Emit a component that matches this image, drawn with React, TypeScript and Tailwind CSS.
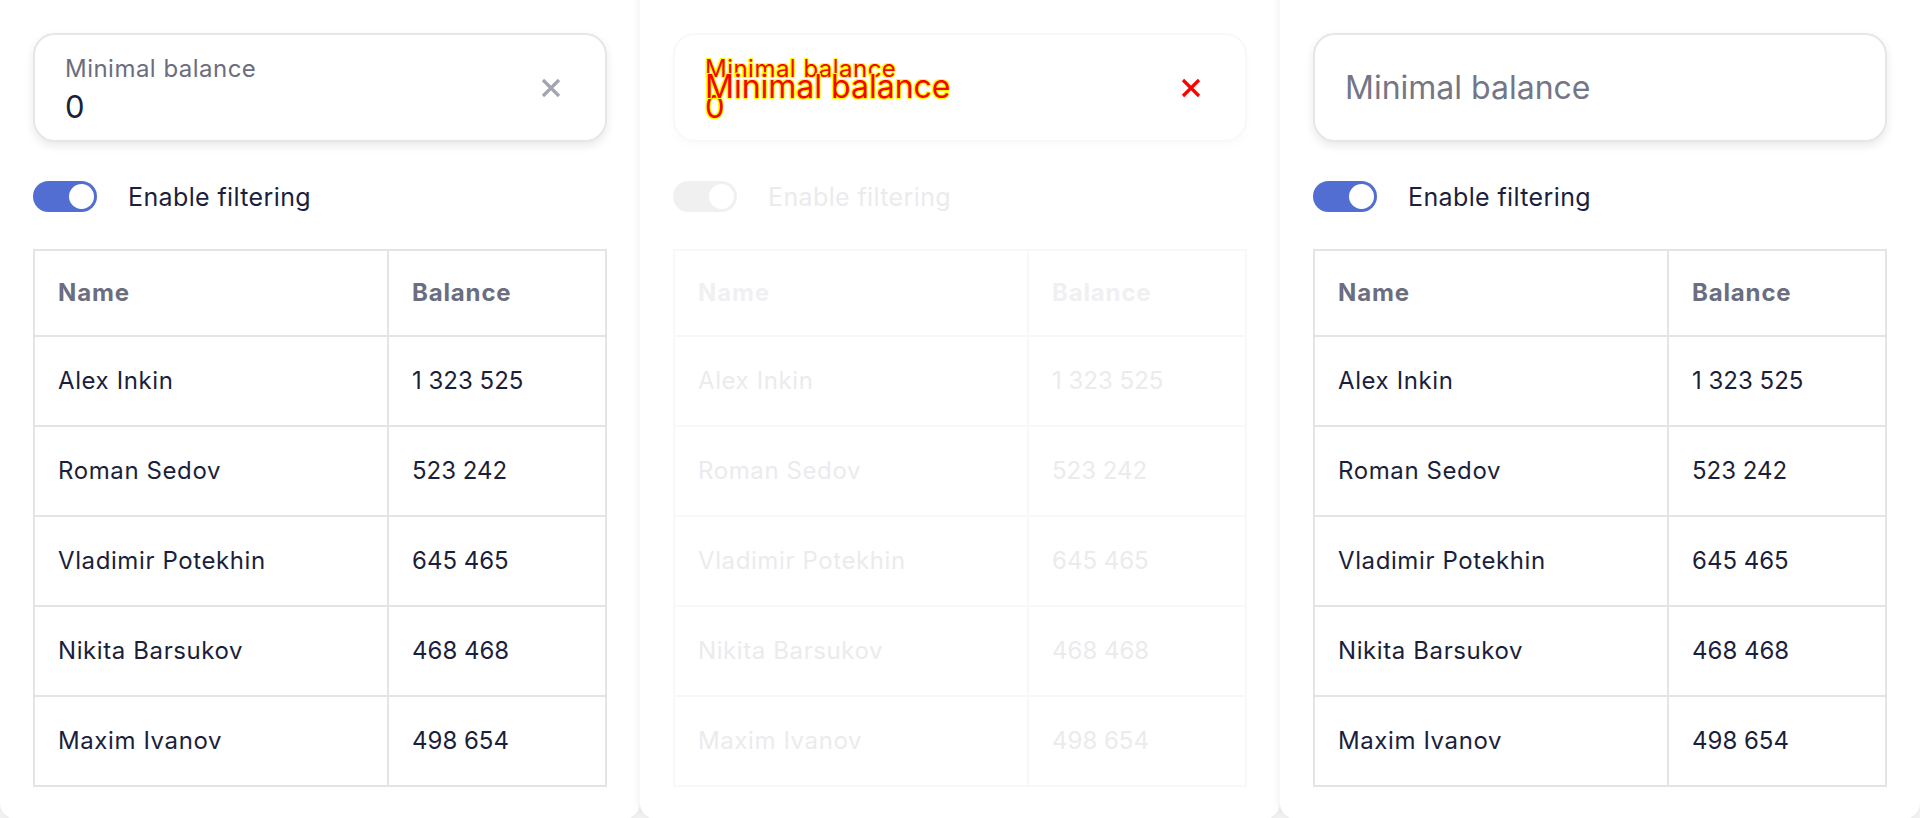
import React from "react";

const rows: [string, string][] = [
  ["Alex Inkin", "1 323 525"],
  ["Roman Sedov", "523 242"],
  ["Vladimir Potekhin", "645 465"],
  ["Nikita Barsukov", "468 468"],
  ["Maxim Ivanov", "498 654"],
];

function Cross({ color }: { color: string }) {
  return (
    <svg width="26" height="26" viewBox="0 0 26 26" fill="none">
      <path d="M5 5 L21 21 M21 5 L5 21" stroke={color} strokeWidth="3.2" strokeLinecap="butt" />
    </svg>
  );
}

function Toggle({ faded }: { faded?: boolean }) {
  return (
    <div className="flex items-center gap-[31px]">
      <div
        className={
          faded
            ? "flex h-[31px] w-[64px] items-center justify-end rounded-full bg-[#f0f0f0] pr-[3px]"
            : "flex h-[31px] w-[64px] items-center justify-end rounded-full bg-[#526ed3] pr-[3px]"
        }
      >
        <div className="h-[25px] w-[25px] rounded-full bg-white" />
      </div>
      <span
        className={
          faded
            ? "text-[25px] leading-[30px] tracking-[0.015em] text-[#ebebed]"
            : "text-[25px] leading-[30px] tracking-[0.015em] text-[#1b1f3b]"
        }
      >
        Enable filtering
      </span>
    </div>
  );
}

function DataTable({ faded }: { faded?: boolean }) {
  const border = faded ? "border-2 border-[#f8f8f8]" : "border-2 border-[#e4e4e4]";
  const head = faded ? "text-[#f0f0f2]" : "text-[#6b6d80]";
  const body = faded ? "text-[#ebebed]" : "text-[#1b1f3b]";
  return (
    <table className="w-full border-collapse text-left text-[24px]">
      <colgroup>
        <col className="w-[354px]" />
        <col />
      </colgroup>
      <thead>
        <tr className="h-[86px]">
          <th className={`${border} ${head} px-[23px] font-bold tracking-[0.035em]`}>Name</th>
          <th className={`${border} ${head} px-[23px] font-bold tracking-[0.035em]`}>Balance</th>
        </tr>
      </thead>
      <tbody>
        {rows.map(([n, b]) => (
          <tr key={n} className="h-[90px]">
            <td className={`${border} ${body} px-[23px] tracking-[0.025em]`}>{n}</td>
            <td className={`${border} ${body} px-[23px]`}>{b}</td>
          </tr>
        ))}
      </tbody>
    </table>
  );
}

const outline =
  "[text-shadow:1px_0_#ff0,-1px_0_#ff0,0_1px_#ff0,0_-1px_#ff0,1px_1px_#ff0,-1px_-1px_#ff0,1px_-1px_#ff0,-1px_1px_#ff0]";

function Panel({ variant }: { variant: "filled" | "debug" | "empty" }) {
  return (
    <div className="-mt-[20px] h-[839px] w-[640px] shrink-0 rounded-[16px] bg-white shadow-[0_0_10px_rgba(0,0,0,0.07)]">
      <div className="flex flex-col px-[33px] pt-[53px]">
        {variant === "filled" && (
          <div className="flex h-[109px] items-center justify-between rounded-[22px] border-2 border-[#e6e6e8] bg-white pl-[30px] pr-[41px] shadow-[0_4px_10px_rgba(0,0,0,0.09)]">
            <div className="flex flex-col pt-[6px]">
              <span className="text-[24px] leading-[28px] tracking-[0.02em] text-[#6b6d80]">Minimal balance</span>
              <span className="mt-[5px] text-[31px] leading-[38px] text-[#1b1f3b]">0</span>
            </div>
            <Cross color="#a3a4ae" />
          </div>
        )}
        {variant === "debug" && (
          <div className="flex h-[109px] items-center justify-between rounded-[22px] border-2 border-[#f8f8f8] bg-white pl-[30px] pr-[41px] shadow-[0_4px_10px_rgba(0,0,0,0.02)]">
            <div className="relative flex flex-col pt-[6px]">
              <span className={`text-[24px] leading-[28px] tracking-[0.02em] text-[#f00] ${outline}`}>Minimal balance</span>
              <span className={`mt-[5px] text-[31px] leading-[38px] text-[#f00] ${outline}`}>0</span>
              <span
                className={`absolute left-0 top-[19px] whitespace-nowrap text-[32px] leading-[38px] text-[#f00] ${outline}`}
              >
                Minimal balance
              </span>
            </div>
            <Cross color="#f00" />
          </div>
        )}
        {variant === "empty" && (
          <div className="flex h-[109px] items-center rounded-[22px] border-2 border-[#e6e6e8] bg-white pl-[30px] shadow-[0_4px_10px_rgba(0,0,0,0.09)]">
            <span className="text-[32px] leading-[38px] text-[#747687]">Minimal balance</span>
          </div>
        )}
        <div className="mt-[39px]">
          <Toggle faded={variant === "debug"} />
        </div>
        <div className="mt-[37px]">
          <DataTable faded={variant === "debug"} />
        </div>
      </div>
    </div>
  );
}

export default function App() {
  return (
    <div
      className="flex h-[818px] w-[1920px] overflow-hidden bg-[#f4f4f4]"
      style={{ fontFamily: "Inter, 'Noto Sans', sans-serif" }}
    >
      <Panel variant="filled" />
      <Panel variant="debug" />
      <Panel variant="empty" />
    </div>
  );
}
